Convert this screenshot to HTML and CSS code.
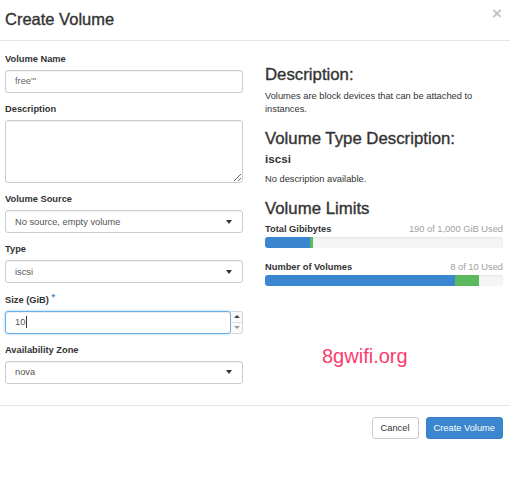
FILE: index.html
```html
<!DOCTYPE html>
<html>
<head>
<meta charset="utf-8">
<link rel="stylesheet" href="styles.css">
</head>
<body>
<div class="modal">
  <div class="modal-header">
    <h4 class="title">Create Volume</h4>
    <span class="close">&times;</span>
  </div>
  <div class="modal-body">
    <div class="left">
      <div class="group">
        <label class="label">Volume Name</label>
        <div class="control text-input">free'''</div>
      </div>
      <div class="group">
        <label class="label">Description</label>
        <textarea class="textarea"></textarea>
      </div>
      <div class="group">
        <label class="label">Volume Source</label>
        <div class="control select"><span>No source, empty volume</span><span class="caret"></span></div>
      </div>
      <div class="group">
        <label class="label">Type</label>
        <div class="control select"><span>iscsi</span><span class="caret"></span></div>
      </div>
      <div class="group">
        <label class="label">Size (GiB) <sup class="req">*</sup></label>
        <div class="number-row">
          <div class="control focused">10<span class="cursor"></span></div>
          <div class="spinner">
            <span class="spin-up"></span>
            <span class="spin-down"></span>
          </div>
        </div>
      </div>
      <div class="group">
        <label class="label">Availability Zone</label>
        <div class="control select"><span>nova</span><span class="caret"></span></div>
      </div>
    </div>
    <div class="right">
      <h3 class="heading first">Description:</h3>
      <p class="para">Volumes are block devices that can be attached to instances.</p>
      <h3 class="heading">Volume Type Description:</h3>
      <h4 class="subheading">iscsi</h4>
      <p class="para">No description available.</p>
      <h3 class="heading">Volume Limits</h3>
      <div class="quota">
        <div class="quota-head"><strong>Total Gibibytes</strong><span class="used">190 of 1,000 GiB Used</span></div>
        <div class="bar"><div class="seg blue" style="width:19%"></div><div class="seg green" style="width:1%"></div></div>
      </div>
      <div class="quota">
        <div class="quota-head"><strong>Number of Volumes</strong><span class="used">8 of 10 Used</span></div>
        <div class="bar"><div class="seg blue" style="width:80%"></div><div class="seg green" style="width:10%"></div></div>
      </div>
      <div class="watermark">8gwifi.org</div>
    </div>
  </div>
  <div class="modal-footer">
    <button class="btn btn-default">Cancel</button>
    <button class="btn btn-primary">Create Volume</button>
  </div>
</div>
</body>
</html>
```

FILE: styles.css
```css
* { box-sizing: border-box; }
html, body {
  margin: 0;
  padding: 0;
  background: #fff;
}
body {
  font-family: "Liberation Sans", Arial, sans-serif;
  font-size: 9.3px;
  color: #333;
}
.modal {
  width: 510px;
}
.modal-header {
  height: 41px;
  display: flex;
  align-items: center;
  justify-content: space-between;
  padding: 0 8px 2px 5px;
  border-bottom: 1px solid #e5e5e5;
}
.title {
  margin: 0;
  font-size: 16.5px;
  font-weight: normal;
  color: #333;
  line-height: 20px;
  -webkit-text-stroke: 0.35px #333;
}
.close {
  font-size: 17px;
  font-weight: bold;
  color: #c4c4c4;
  line-height: 1;
  margin-top: -12px;
}
.modal-body {
  display: grid;
  grid-template-columns: 238px 238px;
  column-gap: 22px;
  padding: 11.5px 7px 21.25px 5px;
}
.group {
  margin-bottom: 10.25px;
}
.group:last-child {
  margin-bottom: 0;
}
.label {
  display: block;
  font-weight: bold;
  line-height: 13px;
  margin-bottom: 4px;
  color: #333;
}
.req {
  color: #3a87cf;
  font-size: 9px;
  vertical-align: top;
  position: relative;
  top: -3px;
}
.control {
  height: 23px;
  border: 1px solid #ccc;
  border-radius: 3px;
  padding: 0 9px;
  display: flex;
  align-items: center;
  color: #555;
  background: #fff;
  box-shadow: inset 0 1px 1px rgba(0,0,0,0.05);
}
.text-input {
  color: #666;
}
.textarea {
  display: block;
  width: 100%;
  height: 63px;
  border: 1px solid #ccc;
  border-radius: 3px;
  box-shadow: inset 0 1px 1px rgba(0,0,0,0.05);
  resize: vertical;
  margin: 0;
}
.select {
  justify-content: space-between;
  padding-right: 10px;
}
.caret {
  width: 0;
  height: 0;
  border-left: 3px solid transparent;
  border-right: 3px solid transparent;
  border-top: 4px solid #333;
}
.number-row {
  display: flex;
}
.focused {
  flex: 1;
  border-color: #66afe9;
  box-shadow: inset 0 1px 1px rgba(0,0,0,0.075), 0 0 3px rgba(102,175,233,0.6);
  color: #555;
}
.cursor {
  display: inline-block;
  width: 1px;
  height: 12px;
  background: #333;
  margin-left: 1px;
}
.spinner {
  width: 12px;
  height: 23px;
  display: flex;
  flex-direction: column;
  border: 1px solid #d6d6d6;
  border-left: none;
  border-radius: 0 3px 3px 0;
  background: #fafafa;
}
.spin-up, .spin-down {
  flex: 1;
  display: flex;
  align-items: center;
  justify-content: center;
}
.spin-up { border-bottom: 1px solid #ddd; }
.spin-up::after {
  content: "";
  border-left: 3px solid transparent;
  border-right: 3px solid transparent;
  border-bottom: 3px solid #444;
}
.spin-down::after {
  content: "";
  border-left: 3px solid transparent;
  border-right: 3px solid transparent;
  border-top: 3px solid #999;
}
.heading {
  margin: 12.5px 0 0;
  font-size: 16.8px;
  font-weight: normal;
  line-height: 20px;
  color: #333;
  -webkit-text-stroke: 0.35px #333;
}
.heading.first {
  margin-top: 12px;
}
.para {
  margin: 5.5px 0 0;
  line-height: 13px;
  width: 220px;
}
.subheading {
  margin: 3px 0 0;
  font-size: 11.7px;
  font-weight: bold;
  line-height: 14px;
}
.subheading + .para {
  margin-top: 7.5px;
}
.quota {
  margin-top: 4.5px;
}
.quota + .quota {
  margin-top: 13.5px;
}
.quota-head {
  display: flex;
  justify-content: space-between;
  line-height: 13px;
}
.used {
  color: #a0a0a0;
}
.bar {
  margin-top: 0.5px;
  height: 11px;
  border-radius: 3px;
  background: #f5f5f5;
  box-shadow: inset 0 1px 2px rgba(0,0,0,0.08);
  display: flex;
  overflow: hidden;
}
.seg { height: 100%; }
.blue { background: #3a87cf; }
.green { background: #5cb85c; }
.watermark {
  margin-top: 58px;
  padding-left: 57px;
  font-size: 20px;
  line-height: 24px;
  color: #fb3a6e;
}
.modal-footer {
  border-top: 1px solid #e5e5e5;
  display: flex;
  justify-content: flex-end;
  gap: 7px;
  padding: 11px 7px 0 0;
}
.btn {
  height: 22px;
  padding: 0 8px;
  font-family: "Liberation Sans", Arial, sans-serif;
  font-size: 9.3px;
  border-radius: 3px;
  border: 1px solid #ccc;
  cursor: pointer;
}
.btn-default {
  background: #fff;
  color: #333;
}
.btn-primary {
  background: #3a87cf;
  border-color: #3580c4;
  color: #fff;
  padding: 0 7px;
}
```
